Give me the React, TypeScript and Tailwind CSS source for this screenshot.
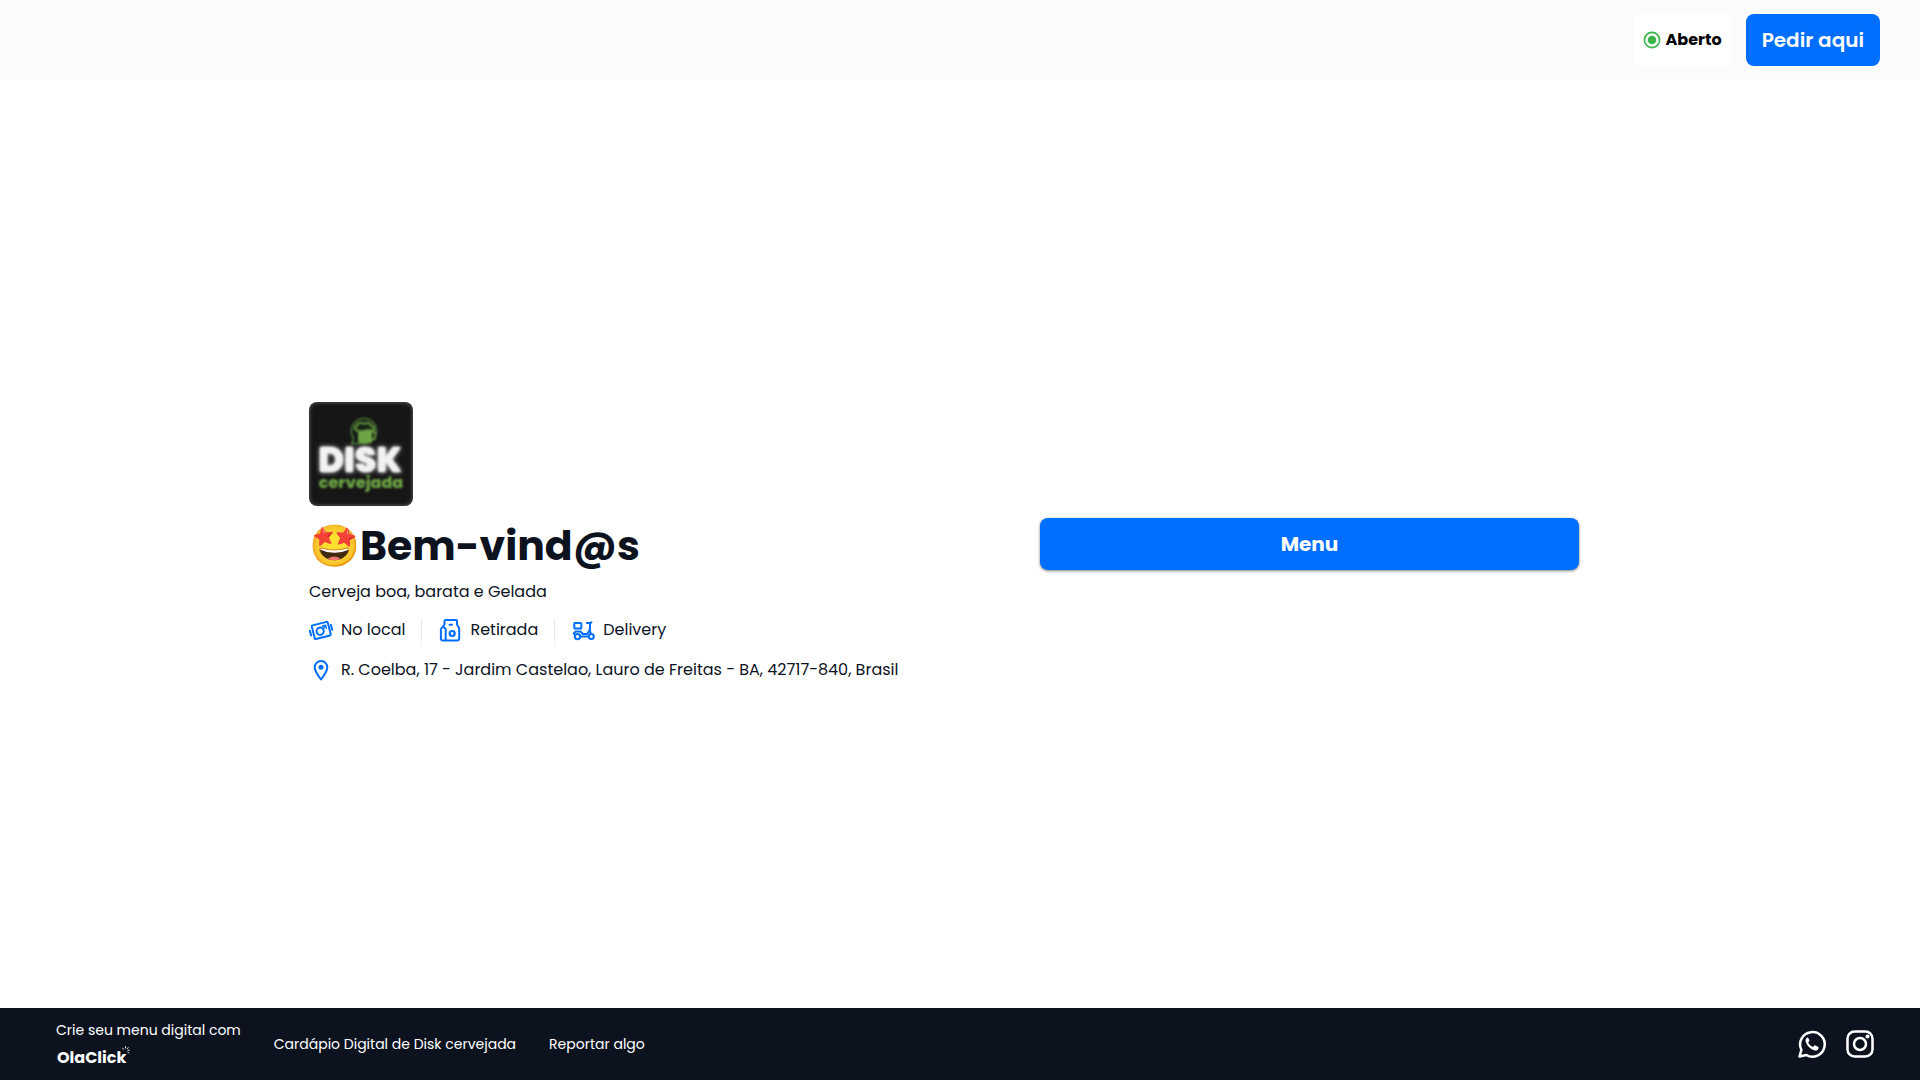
import type { ReactNode } from 'react'

const services = [
  { label: 'No local', icon: <CashIcon /> },
  { label: 'Retirada', icon: <BagIcon /> },
  { label: 'Delivery', icon: <ScooterIcon /> },
]

function Icon({ children }: { children: ReactNode }) {
  return (
    <svg
      viewBox="0 0 24 24"
      className="h-6 w-6 shrink-0"
      fill="none"
      stroke="#006eff"
      strokeWidth="2"
      strokeLinecap="round"
      strokeLinejoin="round"
      aria-hidden="true"
    >
      {children}
    </svg>
  )
}

function CashIcon() {
  return (
    <Icon>
      <g transform="rotate(-14 12 12.5)">
        <rect x="4" y="5.5" width="16.5" height="14" rx="1" />
        <circle cx="11" cy="13" r="3.6" />
        <path d="M1.2 10v5M23 9.5v5" />
        <path d="M14.5 8.5h3.2v3.2M14.8 11.3l2.6-2.6" strokeWidth="1.4" />
      </g>
    </Icon>
  )
}

function BagIcon() {
  return (
    <Icon>
      <path d="M7.500 2h10.500q1 0 1 1v3.500l2.200 4v10.200A1.800 1.800 0 0 1 19.400 22.500H4.700A1.800 1.800 0 0 1 2.900 20.700V11L6.500 6.500V3q0-1 1-1z" />
      <path d="M5.200 8.500 7.700 11v11M11.500 6.800h2.500" />
      <circle cx="14.200" cy="15.500" r="2.500" strokeWidth="2.200" />
    </Icon>
  )
}

function ScooterIcon() {
  return (
    <Icon>
      <rect x="3.3" y="5" width="7" height="5.500" rx=".6" />
      <circle cx="6.500" cy="18.600" r="2.700" />
      <circle cx="20.300" cy="18.600" r="2.500" />
      <path d="M3 16v-.8l1.500-1.600h5.200l2 2.400h4.500l2.800-4.500V5h-3.200M19 5l1.500-.7M18.500 11.500l1.500 4.400M9.300 18.600h8" />
    </Icon>
  )
}

function PinIcon() {
  return (
    <Icon>
      <path d="M12 21.500C8.500 17 5.700 13 5.700 9.300a6.300 6.300 0 0 1 12.600 0C18.300 13 15.500 17 12 21.500z" />
      <circle cx="12" cy="9.300" r="2.500" fill="#006eff" stroke="none" />
    </Icon>
  )
}

function StoreLogo() {
  return (
    <svg viewBox="0 0 104 104" className="h-[104px] w-[104px] rounded-lg" role="img" aria-label="Disk cervejada">
      <defs>
        <filter id="soft" x="-10%" y="-10%" width="120%" height="120%">
          <feGaussianBlur stdDeviation=".8" />
        </filter>
        <filter id="glow" x="-20%" y="-30%" width="140%" height="160%">
          <feGaussianBlur in="SourceGraphic" stdDeviation="2.5" result="halo" />
          <feGaussianBlur in="SourceGraphic" stdDeviation=".8" result="text" />
          <feMerge>
            <feMergeNode in="halo" />
            <feMergeNode in="text" />
          </feMerge>
        </filter>
      </defs>
      <rect width="104" height="104" fill="#3a3a3a" />
      <rect x="2" y="2" width="100" height="100" rx="6" fill="#151515" filter="url(#soft)" />
      <g filter="url(#soft)">
        <path d="M43 41.500l1.500-5.500A12.500 12.500 0 1 1 54 41.500z" fill="none" stroke="#4f8238" strokeWidth="1.5" />
        <path d="M49 26h14v15H52c-2 0-3-1-3-3z" fill="#6da544" />
        <path d="M63 30h3v7h-3" fill="none" stroke="#6da544" strokeWidth="1.5" />
        <path
          d="M49 29c-4 0-4-5-1-5.500 0-3 4-4 7-2 3-2 7 0 7 2 4 0 4 5.500 0 5.500-2-2-4 0-6 0s-3 2-7 0z"
          fill="#182013"
          stroke="#6da544"
          strokeWidth="1.5"
        />
      </g>
      <g className="font-['Poppins',sans-serif] font-extrabold" textAnchor="middle">
        <text x="51" y="70" fontSize="35" fill="#f2f2f2" filter="url(#glow)">
          DISK
        </text>
        <text x="52" y="86" fontSize="16" fill="#6da544" filter="url(#soft)">
          cervejada
        </text>
      </g>
    </svg>
  )
}

function OlaClickLogo() {
  return (
    <span className="flex items-start pl-px">
      <span className="text-base leading-6 font-bold">OlaClick</span>
      <svg
        viewBox="0 0 8 8"
        className="-ml-1 h-2 w-2"
        stroke="#fff"
        strokeWidth=".9"
        strokeLinecap="round"
        aria-hidden="true"
      >
        <path d="M.7 2.2l.8 1M3.5.5v1.5M6.200 1.500l-1 1.200M7.300 4.200H6M6.700 7l-1-.9" />
      </svg>
    </span>
  )
}

export default function App() {
  return (
    <div className="flex min-h-screen flex-col bg-white font-['Poppins','Inter',sans-serif] text-[#0c131f]">
      <header className="flex h-20 items-center justify-end gap-4 bg-[#fcfcfc] px-10">
        <div className="flex h-[52px] items-center gap-1 rounded bg-white px-2 text-black">
          <svg viewBox="0 0 20 20" className="h-5 w-5" aria-hidden="true">
            <circle cx="10" cy="10" r="7.6" fill="none" stroke="#39b54a" strokeWidth="1.6" />
            <circle cx="10" cy="10" r="4.3" fill="#39b54a" />
          </svg>
          <span className="text-base font-bold">Aberto</span>
        </div>
        <button type="button" className="h-[52px] rounded-lg bg-[#006eff] px-4 text-xl font-semibold text-white">
          Pedir aqui
        </button>
      </header>

      <main className="flex flex-1 items-center justify-center">
        <div className="grid w-full max-w-[1302px] grid-cols-2 items-center">
          <section className="pb-1">
            <StoreLogo />
            <h1 className="mt-2 text-[41px] leading-[64px] font-bold">🤩Bem-vind@s</h1>
            <p className="mt-0.5 leading-6">Cerveja boa, barata e Gelada</p>
            <ul className="mt-3.5 flex">
              {services.map((service) => (
                <li
                  key={service.label}
                  className="mr-4 flex h-6 items-center gap-2 border-r border-gray-200 pr-4 last:mr-0 last:border-0 last:pr-0"
                >
                  {service.icon}
                  {service.label}
                </li>
              ))}
            </ul>
            <address className="mt-4 flex items-center gap-2 leading-6 not-italic [font-kerning:none]">
              <PinIcon />
              R. Coelba, 17 - Jardim Castelao, Lauro de Freitas - BA, 42717-840, Brasil
            </address>
          </section>
          <div className="pr-8 pl-20">
            <button
              type="button"
              className="h-[52px] w-full rounded-lg bg-[#006eff] text-xl font-bold text-white shadow-[0_1px_3px_rgba(0,0,0,0.5)]"
            >
              Menu
            </button>
          </div>
        </div>
      </main>

      <footer className="flex h-[72px] items-center justify-between bg-[#0c131f] px-14 text-sm text-white">
        <nav className="flex items-center gap-[33px]">
          <a href="#olaclick" className="flex flex-col gap-1.5 pt-0.5">
            <span>Crie seu menu digital com</span>
            <OlaClickLogo />
          </a>
          <a href="#cardapio">Cardápio Digital de Disk cervejada</a>
          <a href="#reportar">Reportar algo</a>
        </nav>
        <div className="-mr-3 flex gap-4">
          <a href="#whatsapp" aria-label="WhatsApp">
            <svg viewBox="0 0 32 32" className="h-8 w-8" fill="none" aria-hidden="true">
              <path d="M3.500 28.500l1.900-6.700A12.300 12.300 0 1 1 10.300 27z" stroke="#fff" strokeWidth="2.5" strokeLinejoin="round" />
              <path
                d="M11.500 9.500c-1.800.7-2.300 2.600-1.700 4.600 1.200 3.900 4.300 7 8.200 8.200 2.300.7 4.200-.3 4.600-2.400.1-.6-.1-.9-.6-1.200l-2.700-1.300c-.5-.2-.9-.1-1.200.3l-1 1.300c-2.200-.9-3.900-2.500-4.900-4.500l1-1.300c.3-.4.3-.8.1-1.200l-1.100-2.100c-.2-.4-.4-.5-.7-.4z"
                fill="#fff"
              />
            </svg>
          </a>
          <a href="#instagram" aria-label="Instagram">
            <svg viewBox="0 0 32 32" className="h-8 w-8" fill="none" stroke="#fff" strokeWidth="2.5" aria-hidden="true">
              <rect x="3.500" y="3.500" width="25" height="25" rx="7" />
              <circle cx="16" cy="16" r="6" />
              <circle cx="23.500" cy="8.500" r="2" fill="#fff" stroke="none" />
            </svg>
          </a>
        </div>
      </footer>
    </div>
  )
}
